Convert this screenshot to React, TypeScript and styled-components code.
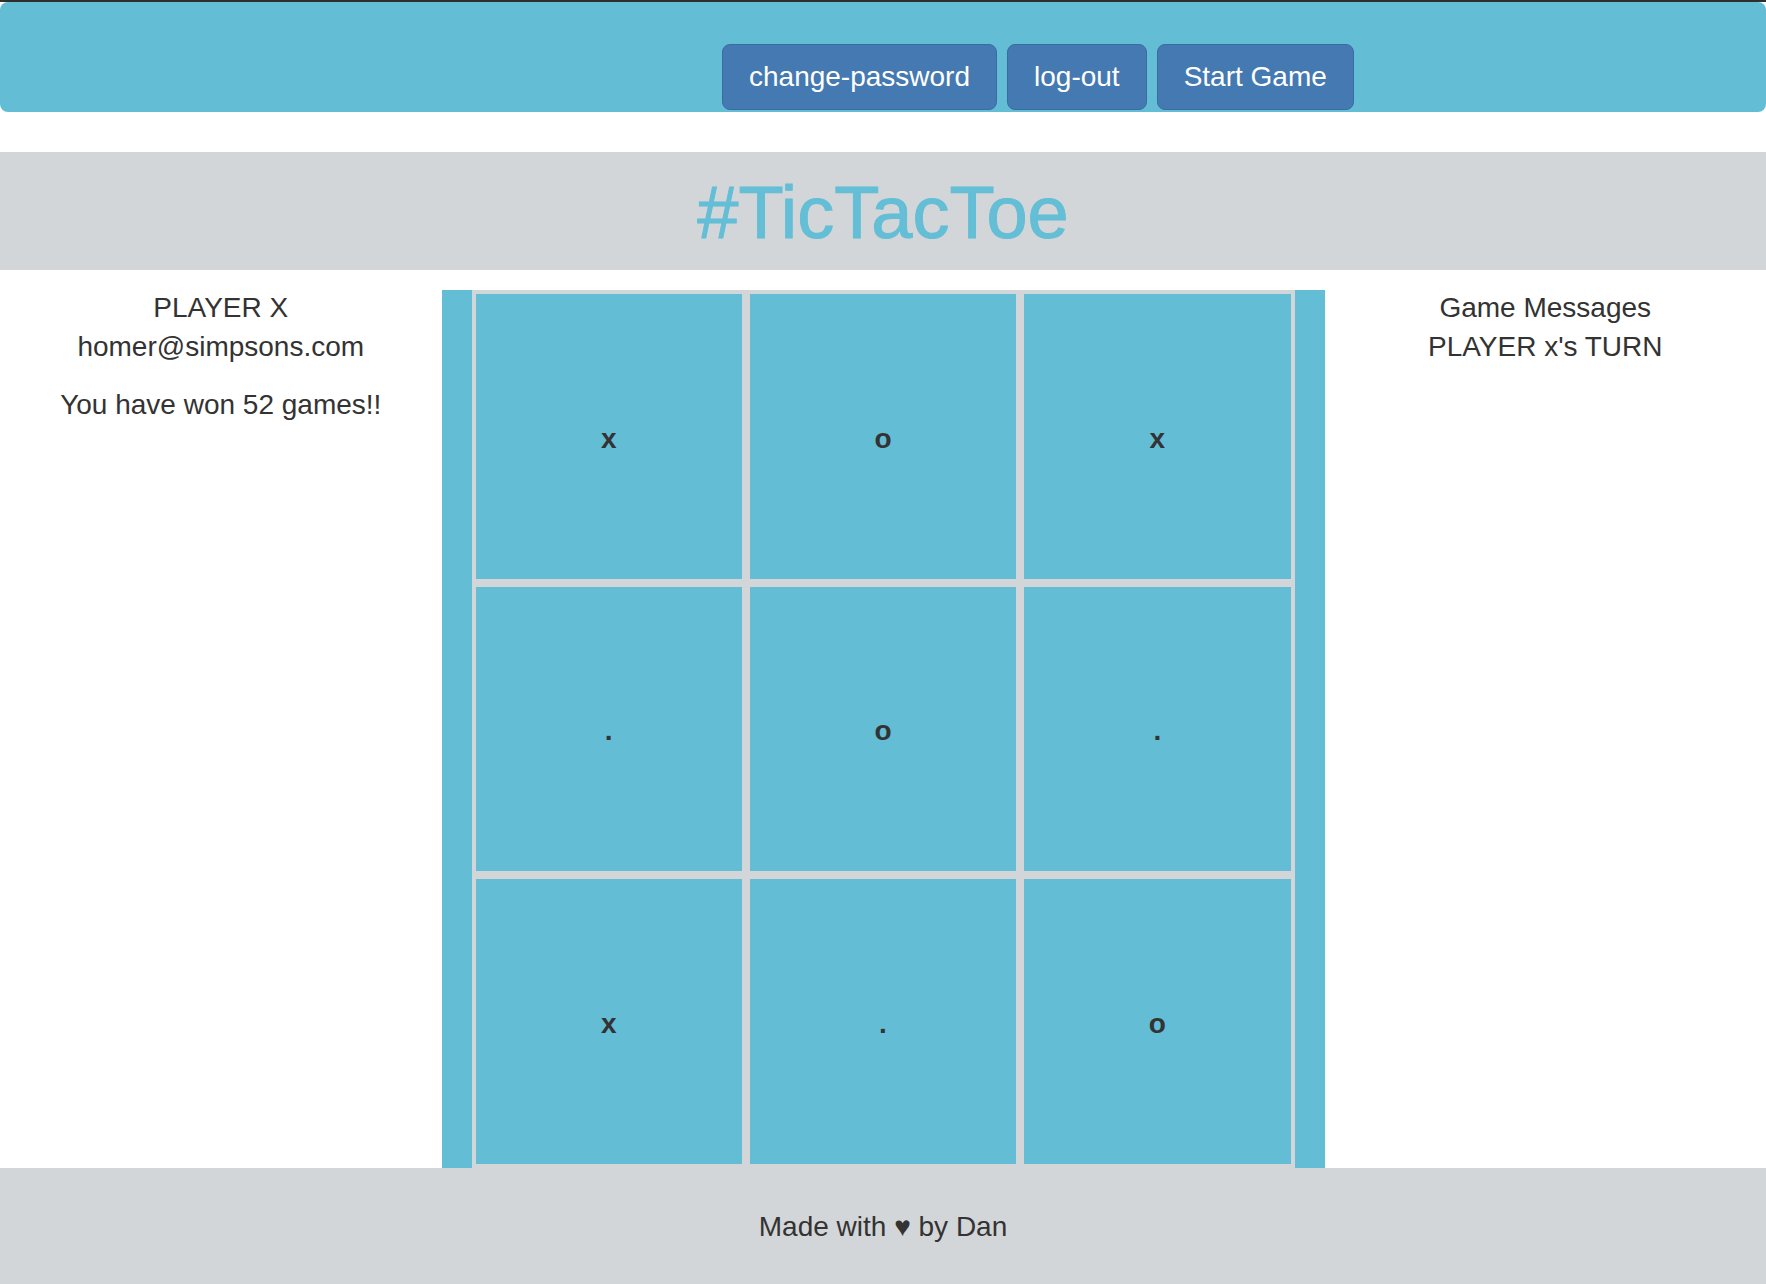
import React from "react";
import styled, { createGlobalStyle } from "styled-components";

const GlobalStyle = createGlobalStyle`
  html, body {
    margin: 0;
    padding: 0;
    background: #ffffff;
  }

  body {
    border-top: 2px solid #2f2f2f;
    font-family: "Liberation Sans", Arial, Helvetica, sans-serif;
    font-size: 28px;
    line-height: 39px;
    color: #333333;
  }
`;

const Navbar = styled.nav`
  display: flex;
  align-items: flex-start;
  gap: 10px;
  height: 110px;
  box-sizing: border-box;
  padding: 42px 0 0 722px;
  background-color: #62bdd5;
  border-radius: 8px;
`;

const NavButton = styled.button`
  height: 66px;
  padding: 0 26px;
  font-family: inherit;
  font-size: 28px;
  color: #ffffff;
  background-color: #4479b2;
  border: 1px solid #3a6ca2;
  border-radius: 8px;
  cursor: pointer;
`;

const TitleBand = styled.header`
  margin-top: 40px;
  height: 118px;
  display: flex;
  align-items: center;
  justify-content: center;
  background-color: #d3d6d8;
`;

const Title = styled.h1`
  margin: 0;
  padding-top: 4px;
  font-size: 74px;
  font-weight: 500;
  line-height: 1;
  color: #63bed6;
  -webkit-text-stroke: 1px #63bed6;
`;

const Main = styled.main`
  display: grid;
  grid-template-columns: 1fr 2fr 1fr;
  margin-top: 20px;
`;

const SidePanel = styled.section`
  text-align: center;
  margin-top: -2px;
`;

const Line = styled.p<{ $gap?: number }>`
  margin: ${(p) => p.$gap ?? 0}px 0 0;
`;

const Board = styled.div`
  padding: 0 30px;
  background-color: #62bdd5;
`;

const Grid = styled.div`
  display: grid;
  grid-template-columns: repeat(3, 1fr);
  grid-template-rows: repeat(3, 1fr);
  height: 878px;
`;

const Cell = styled.div`
  display: flex;
  align-items: center;
  justify-content: center;
  box-sizing: border-box;
  padding-top: 4px;
  border: 4px solid #d3d6d8;
  background-color: #62bdd5;
  font-weight: bold;
  font-size: 28px;
  color: #333333;
`;

const Footer = styled.footer`
  padding: 39px 0;
  text-align: center;
  background-color: #d3d6d8;
`;

const cells = ["x", "o", "x", ".", "o", ".", "x", ".", "o"];

export default function App() {
  return (
    <>
      <GlobalStyle />
      <Navbar>
        <NavButton>change-password</NavButton>
        <NavButton>log-out</NavButton>
        <NavButton>Start Game</NavButton>
      </Navbar>

      <TitleBand>
        <Title>#TicTacToe</Title>
      </TitleBand>

      <Main>
        <SidePanel>
          <Line>PLAYER X</Line>
          <Line>homer@simpsons.com</Line>
          <Line $gap={19}>You have won 52 games!!</Line>
        </SidePanel>

        <Board>
          <Grid>
            {cells.map((c, i) => (
              <Cell key={i}>{c}</Cell>
            ))}
          </Grid>
        </Board>

        <SidePanel>
          <Line>Game Messages</Line>
          <Line>PLAYER x's TURN</Line>
        </SidePanel>
      </Main>

      <Footer>Made with ♥ by Dan</Footer>
    </>
  );
}
